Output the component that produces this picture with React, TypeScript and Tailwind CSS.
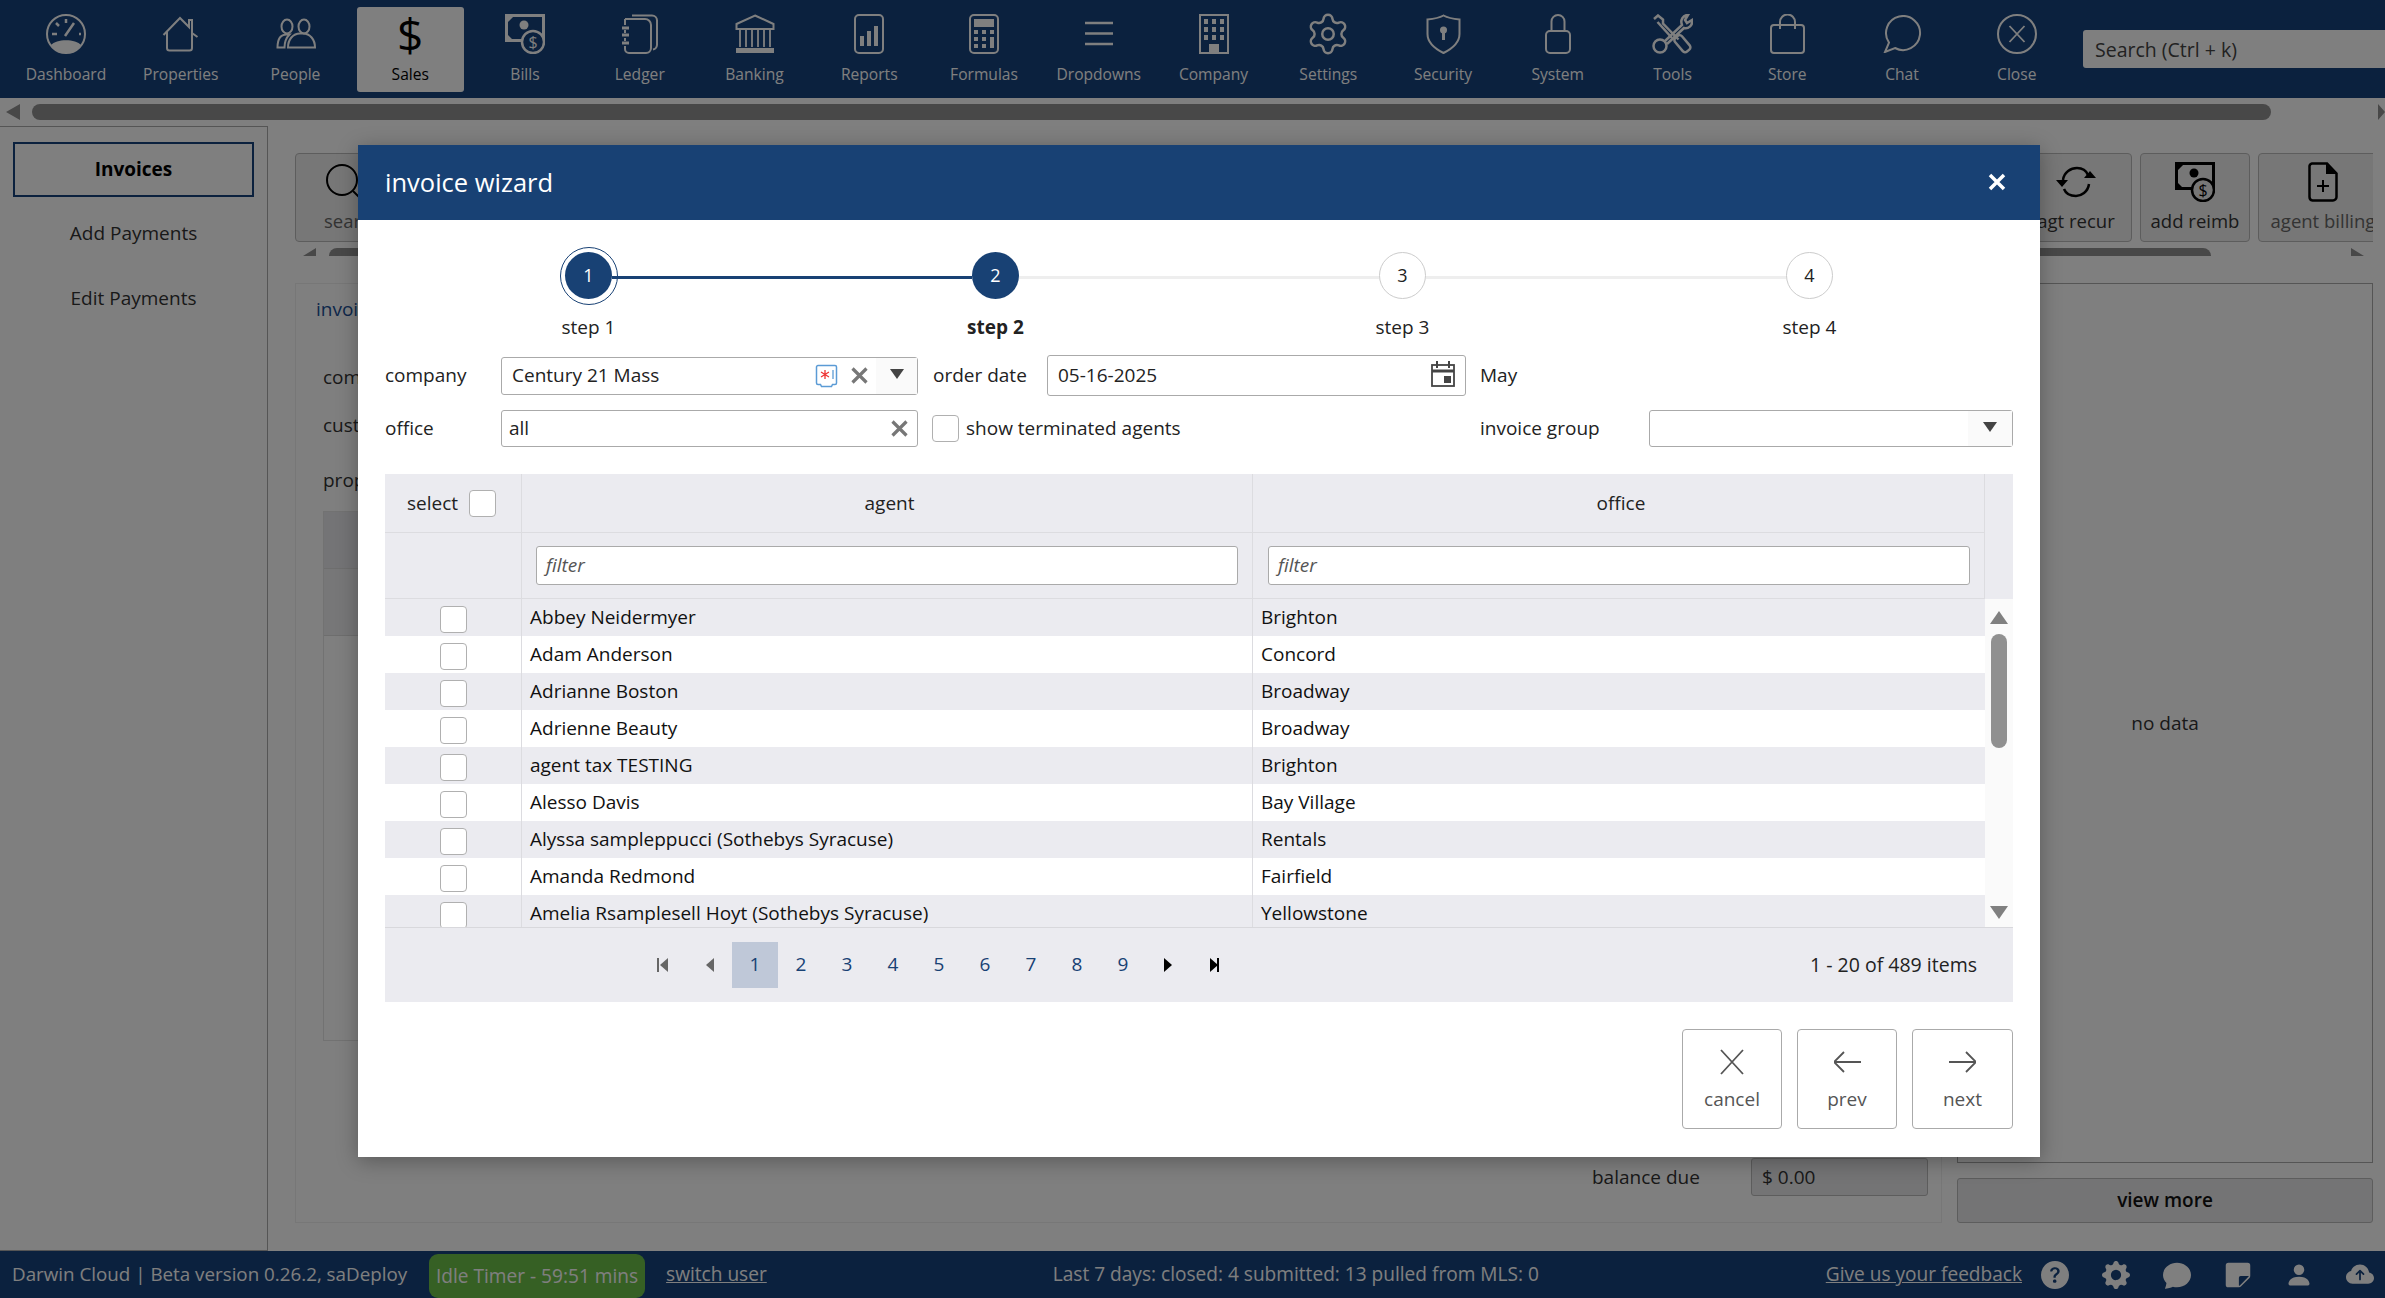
import { BsChatFill, BsCloudArrowUpFill, BsGearFill, BsPersonFill, BsQuestionCircleFill, BsStickyFill } from "react-icons/bs";
import { Settings } from "lucide-react";
import type { ReactNode } from "react";

const NAVY = "#16427c";

function Svg({ w, h, children, className }: { w: number; h: number; children: ReactNode; className?: string }) {
  return (
    <svg width={w} height={h} viewBox={`0 0 ${w} ${h}`} fill="none" stroke="currentColor" strokeWidth={2} className={className}>
      {children}
    </svg>
  );
}

const BillsIcon = ({ bg }: { bg: string }) => (
  <Svg w={40} h={40}>
    <rect x="1.5" y="1.5" width="37" height="25" strokeWidth={3} />
    <path d="M1 1h9L1 10zM1 27v-8l8 8z" fill="currentColor" stroke="none" />
    <circle cx="19" cy="11" r="4.5" fill="currentColor" stroke="none" />
    <circle cx="28" cy="28" r="11" fill={bg} strokeWidth={2.5} />
    <text x="28" y="34" textAnchor="middle" fontSize="16" fill="currentColor" stroke="none">$</text>
  </Svg>
);

const icons: Record<string, ReactNode> = {
  Dashboard: (
    <Svg w={40} h={40}>
      <circle cx="20" cy="20" r="19" />
      <path d="M5 31C10 24.500 30 24.500 35 31 27 42 13 42 5 31z" fill="currentColor" stroke="none" />
      <path d="M19 22 28 9M6 20h5M10 9l3 3M20 5v4M33 20h2" strokeWidth={2.500} />
    </Svg>
  ),
  Properties: (
    <Svg w={37} h={36}>
      <path d="M1.500 19 18 2l9 9V4h3v13l5.500 4" />
      <path d="M5 16v16a2.500 2.500 0 0 0 2.500 2.500h20A2.500 2.500 0 0 0 30 32V16" />
    </Svg>
  ),
  People: (
    <Svg w={40} h={31}>
      <ellipse cx="11" cy="8.500" rx="5.500" ry="7" />
      <ellipse cx="28" cy="8.500" rx="5.500" ry="7" />
      <path d="M1.500 29.500c0-8 3-13 9-13h3c-3 3-5 7-5 13z" />
      <path d="M12 29.500c0-8 5-14 12-14h3c7 0 12 6 12 14z" />
    </Svg>
  ),
  Bills: <BillsIcon bg={NAVY} />,
  Ledger: (
    <Svg w={38} h={40}>
      <path d="M11 1.500h20a5 5 0 0 1 5 5V31a5 5 0 0 1-4 4.500" />
      <path d="M4 5h20a6 6 0 0 1 6 6v23a5 5 0 0 1-5 5H8a4 4 0 0 1-4-4" />
      <path d="M4 5v6M4 16v3M4 24v3M4 32v3" />
      <path d="M1 14h7M1 21h7M1 29h7" strokeWidth={3} />
    </Svg>
  ),
  Banking: (
    <Svg w={40} h={40}>
      <path d="M20 1.500 38.500 10v5h-37v-5z" />
      <path d="M5 16v17M11 16v17M17 16v17M23 16v17M29 16v17M35 16v17" strokeWidth={1.800} />
      <rect x="1" y="34" width="38" height="5" fill="currentColor" stroke="none" />
    </Svg>
  ),
  Reports: (
    <Svg w={30} h={40}>
      <rect x="1" y="1" width="28" height="38" rx="4" />
      <path d="M6 22h4v10H6zM13 17h4v15h-4zM20 12h4v20h-4z" fill="currentColor" stroke="none" />
    </Svg>
  ),
  Formulas: (
    <Svg w={30} h={40}>
      <rect x="1" y="1" width="28" height="38" rx="4" />
      <path d="M5 5h20v8H5zM5 16h4v4H5zM13 16h4v4h-4zM21 16h4v4h-4zM5 23h4v4H5zM13 23h4v4h-4zM5 30h4v4H5zM13 30h4v4h-4zM21 23h4v11h-4z" fill="currentColor" stroke="none" />
    </Svg>
  ),
  Dropdowns: (
    <Svg w={28} h={26}>
      <path d="M0 2h28M0 12.500h28M0 23h28" strokeWidth={2.500} />
    </Svg>
  ),
  Company: (
    <Svg w={30} h={40}>
      <rect x="1" y="1" width="28" height="38" />
      <path d="M5 5h4v5H5zM13 5h4v5h-4zM21 5h4v5h-4zM5 13h4v5H5zM13 13h4v5h-4zM21 13h4v5h-4zM5 21h4v5H5zM13 21h4v5h-4zM21 21h4v5h-4zM10 30h10v9H10z" fill="currentColor" stroke="none" />
    </Svg>
  ),
  Settings: <Settings size={46} strokeWidth={1.300} />,
  Security: (
    <Svg w={35} h={40}>
      <path d="M17.500 1.500C13 4 7 5 1.500 5.500V20c0 9 8 15 16 19 8-4 16-10 16-19V5.500C28 5 22 4 17.500 1.500z" />
      <circle cx="17.500" cy="16" r="3.500" fill="currentColor" stroke="none" />
      <path d="M16 17h3v9h-3z" fill="currentColor" stroke="none" />
    </Svg>
  ),
  System: (
    <Svg w={26} h={40}>
      <rect x="1" y="17" width="24" height="22" rx="4" />
      <path d="M6.500 17V7.500a6.500 6.500 0 0 1 13 0V17" />
    </Svg>
  ),
  Tools: (
    <Svg w={41} h={40}>
      <path d="M2 5 6 1.500l5 4v4l15.500 16" strokeWidth={2.500} />
      <path d="M5.500 8 20 24" strokeWidth={2.500} />
      <rect x="26" y="21" width="9" height="18" rx="3" transform="rotate(-40 30 30)" strokeWidth={2.500} />
      <path d="M13 27 30 11c-2-5 1-10 6-10l-3 5 2 3 5-3c1 6-4 9-8 8L15 30" strokeWidth={2.500} />
      <circle cx="8" cy="32" r="6.500" strokeWidth={2.500} />
    </Svg>
  ),
  Store: (
    <Svg w={35} h={40}>
      <rect x="1" y="11" width="33" height="28" rx="3" />
      <path d="M10 15V8a7.500 7.500 0 0 1 15 0v7" />
    </Svg>
  ),
  Chat: (
    <Svg w={41} h={38}>
      <path d="M7 27.600a17 17 0 1 1 6 5.400L3 37z" strokeWidth={2} />
    </Svg>
  ),
  Close: (
    <Svg w={40} h={40}>
      <circle cx="20" cy="20" r="19" />
      <path d="m12.500 12 15 16M27.500 12l-15 16" strokeWidth={1.800} />
    </Svg>
  ),
};

const navItems = ["Dashboard", "Properties", "People", "Sales", "Bills", "Ledger", "Banking", "Reports", "Formulas", "Dropdowns", "Company", "Settings", "Security", "System", "Tools", "Store", "Chat", "Close"];

const agents = [
  ["Abbey Neidermyer", "Brighton"],
  ["Adam Anderson", "Concord"],
  ["Adrianne Boston", "Broadway"],
  ["Adrienne Beauty", "Broadway"],
  ["agent tax TESTING", "Brighton"],
  ["Alesso Davis", "Bay Village"],
  ["Alyssa sampleppucci (Sothebys Syracuse)", "Rentals"],
  ["Amanda Redmond", "Fairfield"],
  ["Amelia Rsamplesell Hoyt (Sothebys Syracuse)", "Yellowstone"],
];

function NavBar() {
  return (
    <div className="flex items-center h-[98px] shrink-0 pl-[12.500px] bg-[#16427c] overflow-hidden">
      <div className="flex gap-[7.750px] shrink-0">
        {navItems.map((n) => (
          <div key={n} className={`w-[107px] h-[85px] rounded-[3px] flex flex-col items-center pt-[7px] ${n === "Sales" ? "bg-white text-black" : "text-white"}`}>
            <div className="h-[40px] flex items-center justify-center">
              {n === "Sales" ? <span className="text-[46px] leading-[40px]">$</span> : icons[n]}
            </div>
            <span className="mt-[8px] text-[15.600px] leading-[24px]">{n}</span>
          </div>
        ))}
      </div>
      <div className="ml-[12.750px] w-[340px] h-[38px] shrink-0 bg-white rounded-l-[3px] pl-[12px] pt-[1px] flex items-center text-[19.500px] text-[#444]">Search (Ctrl + k)</div>
    </div>
  );
}

function ToolButton({ label, icon, className }: { label: string; icon: ReactNode; className: string }) {
  return (
    <div className={`h-[89px] bg-[#eeeeee] border border-[#bbbbbb] rounded-[4px] flex flex-col items-center pt-[7px] shrink-0 ${className}`}>
      <div className="h-[42px] flex items-center justify-center text-black">{icon}</div>
      <span className="mt-[5px] text-[18.500px] leading-[26px] whitespace-nowrap">{label}</span>
    </div>
  );
}

function BackPage() {
  return (
    <div className="flex-1 min-h-0 flex flex-col">
      <div className="flex items-center h-[16px] mt-[6px] shrink-0">
        <svg width="20" height="16" className="ml-[6px] shrink-0 text-[#909090]"><path d="M14 0v16L0 8z" fill="currentColor" /></svg>
        <div className="ml-[6px] w-[2239px] h-[16px] rounded-full bg-[#909090]" />
        <svg width="7" height="16" className="ml-[107px] shrink-0 text-[#909090]"><path d="M0 0l7 8-7 8z" fill="currentColor" /></svg>
      </div>
      <div className="flex-1 min-h-0 flex mt-[6px]">
        <div className="w-[268px] shrink-0 border-t border-r border-b border-[#aaaaaa] px-[13px] pt-[15px] text-[19px] text-[#333]">
          <div className="h-[55px] border-2 border-[#16427c] flex items-center justify-center font-bold text-black">Invoices</div>
          <div className="h-[65px] mt-[4px] flex items-center justify-center">Add Payments</div>
          <div className="h-[65px] flex items-center justify-center">Edit Payments</div>
        </div>
        <div className="flex-1 min-w-0 pl-[27px] pr-[12px] pt-[27px] pb-[28px] flex flex-col">
          <div className="flex justify-between h-[89px] overflow-hidden shrink-0">
            <ToolButton
              label="sear"
              className="w-[116px] text-[#666] !items-start pl-[28px]"
              icon={<svg width="40" height="40" fill="none" stroke="currentColor" strokeWidth="2"><circle cx="18" cy="18" r="15" /><path d="m29 29 9 9" /></svg>}
            />
            <div className="flex gap-[8px] -mr-[15px]">
              <ToolButton
                label="agt recur"
                className="w-[112px] text-[#333]"
                icon={
                  <svg width="40" height="32" fill="none" stroke="currentColor" strokeWidth="2.500">
                    <path d="M7 14c1-8 8-12 14-12 5 0 9 2 11 7M33 18c-1 8-8 12-13 12-6 0-10-2-12-7" />
                    <path d="M0 14h12l-6 7zM28 12h12l-6-7z" fill="currentColor" stroke="none" />
                  </svg>
                }
              />
              <ToolButton label="add reimb" className="w-[110px] text-[#333]" icon={<BillsIcon bg="#eeeeee" />} />
              <ToolButton
                label="agent billing"
                className="w-[130px] text-[#666]"
                icon={
                  <svg width="30" height="40" fill="none" stroke="currentColor" strokeWidth="2.500">
                    <path d="M4 1.500h15l9.500 10V35a3.500 3.500 0 0 1-3.500 3.500H4.500A3.500 3.500 0 0 1 1.500 35V4A3 3 0 0 1 4 1.500z" />
                    <path d="M18 1.500V12h10.500z" fill="currentColor" stroke="none" />
                    <path d="M15 18v12M9 24h12" strokeWidth="2" />
                  </svg>
                }
              />
            </div>
          </div>
          <div className="flex items-start h-[8px] mt-[6px] overflow-hidden shrink-0">
            <svg width="13" height="8" className="ml-[8px] text-[#909090]"><path d="M13 0v8H0z" fill="currentColor" /></svg>
            <div className="ml-[13px] w-[1882px] h-[16px] rounded-t-[8px] bg-[#909090]" />
            <svg width="13" height="8" className="ml-[140px] text-[#909090]"><path d="M0 0v8h13z" fill="currentColor" /></svg>
          </div>
          <div className="flex gap-[15px] flex-1 min-h-0 mt-[27px]">
            <div className="flex-1 min-w-0 border border-[#eeeeee] flex flex-col text-[19px] text-[#333]">
              <div className="pl-[20px] pt-[12px] leading-[26px] text-[#1a4f96]">invoi</div>
              <div className="pl-[27px] mt-[42px] leading-[26px]">com</div>
              <div className="pl-[27px] mt-[22px] leading-[26px]">cust</div>
              <div className="pl-[27px] mt-[29px] leading-[26px]">prop</div>
              <div className="ml-[27px] mr-[27px] mt-[18px] h-[530px] border border-[#e4e4e4] flex flex-col">
                <div className="h-[57px] bg-[#e8e8ec] border-b border-[#dddddd]" />
                <div className="h-[67px] bg-[#eeeef0] border-b border-[#dddddd]" />
              </div>
              <div className="mt-auto flex items-center justify-end pr-[13px] pb-[26px]">
                <span className="w-[159px]">balance due</span>
                <div className="w-[177px] h-[38px] bg-[#e8e8ea] border border-[#bbbbbb] rounded-[3px] flex items-center pl-[10px]">$ 0.00</div>
              </div>
            </div>
            <div className="w-[416px] shrink-0 flex flex-col gap-[15px]">
              <div className="flex-1 border border-[#aaaaaa] flex items-center justify-center text-[19px] text-[#333]">no data</div>
              <div className="h-[45px] bg-[#e8e8ea] border border-[#bbbbbb] rounded-[3px] flex items-center justify-center text-[19px] font-semibold text-[#111]">view more</div>
            </div>
          </div>
        </div>
      </div>
    </div>
  );
}

function StatusBar() {
  return (
    <div className="h-[47px] shrink-0 bg-[#16427c] flex items-center text-white text-[19.100px] whitespace-nowrap">
      <span className="ml-[12px] w-[417px] shrink-0 text-[18.800px]">Darwin Cloud | Beta version 0.26.2, saDeploy</span>
      <span className="h-[44px] self-end px-[7px] rounded-[9px] bg-[#6cc048] flex items-center">Idle Timer - 59:51 mins</span>
      <span className="ml-[21px] underline">switch user</span>
      <span className="ml-[286px]">Last 7 days: closed: 4 submitted: 13 pulled from MLS: 0</span>
      <span className="ml-auto underline">Give us your feedback</span>
      <div className="ml-[19px] mr-[11px] flex items-center gap-[33px] text-[28px]">
        <BsQuestionCircleFill />
        <BsGearFill />
        <BsChatFill />
        <BsStickyFill />
        <BsPersonFill />
        <BsCloudArrowUpFill />
      </div>
    </div>
  );
}

const XMark = ({ size = 17 }: { size?: number }) => (
  <svg width={size} height={size} viewBox="0 0 17 17" stroke="#777777" strokeWidth="3.200" fill="none" className="shrink-0"><path d="m1.500 1.500 14 14M15.500 1.500l-14 14" /></svg>
);

const Caret = () => (
  <svg width="14" height="10" viewBox="0 0 14 10" className="shrink-0"><path d="M0 0h14L7 10z" fill="#444444" /></svg>
);

const Check = ({ className = "" }: { className?: string }) => (
  <div className={`w-[27px] h-[27px] bg-white border border-[#b0b0b0] rounded-[4px] shrink-0 ${className}`} />
);

function Stepper() {
  const steps = [1, 2, 3, 4];
  return (
    <div className="grid grid-cols-4 pt-[27px]">
      {steps.map((s) => {
        const left = s === 1 ? "bg-transparent" : s === 2 ? "bg-[#184174]" : "bg-[#eeeeee]";
        const right = s === 4 ? "bg-transparent" : s === 1 ? "bg-[#184174]" : "bg-[#eeeeee]";
        const circle = s <= 2 ? "bg-[#184174] text-white" : "bg-white border border-[#cccccc] text-[#222]";
        return (
          <div key={s} className="flex flex-col items-center">
            <div className="flex items-center w-full h-[57px]">
              <div className={`flex-1 h-[3px] mt-[3px] ${left}`} />
              <div className={`relative w-[47px] h-[47px] rounded-full flex items-center justify-center text-[18px] ${circle}`}>
                {s}
                {s === 1 && <div className="absolute -inset-[5.500px] rounded-full border border-[#184174]" />}
              </div>
              <div className={`flex-1 h-[3px] mt-[3px] ${right}`} />
            </div>
            <span className={`mt-[10px] text-[19px] leading-[27px] text-[#222] ${s === 2 ? "font-bold" : ""}`}>step {s}</span>
          </div>
        );
      })}
    </div>
  );
}

function Wizard() {
  return (
    <div className="absolute left-[358px] top-[145px] w-[1682px] h-[1012px] z-20 bg-white shadow-[0_4px_20px_rgba(0,0,0,0.3)] text-[19px] text-[#222] flex flex-col">
      <div className="h-[75px] shrink-0 bg-[#184174] flex items-center justify-between pl-[27px] pr-[34px] text-white">
        <span className="text-[25.500px]">invoice wizard</span>
        <svg width="18" height="18" viewBox="0 0 18 18" stroke="white" strokeWidth="3.500" fill="none" className="mb-[2px]"><path d="m2 2 14 14M16 2 2 16" /></svg>
      </div>
      <div className="px-[27px] flex flex-col flex-1">
        <Stepper />
        <div className="flex items-center h-[41px] mt-[14px]">
          <span className="w-[116px] shrink-0">company</span>
          <div className="w-[417px] h-[38px] border border-[#aaaaaa] rounded-[3px] flex items-center pl-[10px]">
            <span className="flex-1">Century 21 Mass</span>
            <svg width="23" height="24" viewBox="0 0 23 24" fill="none" className="shrink-0">
              <path d="M3 1.500h17a1.500 1.500 0 0 1 1.500 1.500v16a1.500 1.500 0 0 1-1.500 1.500h-2.500l-1 2h-10l-1-2H3A1.500 1.500 0 0 1 1.500 19V3A1.500 1.500 0 0 1 3 1.500z" stroke="#5b9bd5" strokeWidth="1.500" />
              <path d="M10 6v9M6 8l8 5M14 8l-8 5" stroke="#ee3333" strokeWidth="1.300" />
              <path d="M18 6v9" stroke="#5b9bd5" strokeWidth="1.300" />
            </svg>
            <div className="ml-[13px]"><XMark /></div>
            <div className="ml-[8px] w-[41px] h-full bg-[#fafafa] flex items-center justify-center pb-[4px]"><Caret /></div>
          </div>
          <span className="ml-[15px] w-[114px] shrink-0">order date</span>
          <div className="w-[419px] h-[41px] border border-[#aaaaaa] rounded-[3px] flex items-center pl-[10px]">
            <span className="flex-1">05-16-2025</span>
            <svg width="24" height="26" viewBox="0 0 24 26" fill="none" stroke="#444444" strokeWidth="1.800" className="mr-[10px] mb-[3px]">
              <rect x="1" y="4" width="22" height="21" />
              <path d="M1 10h22" strokeWidth="3" />
              <path d="M6 0v7M18 0v7" strokeWidth="2" />
              <path d="M13 15h7v7h-7z" fill="#444444" stroke="none" />
            </svg>
          </div>
          <span className="ml-[14px]">May</span>
        </div>
        <div className="flex items-center h-[37px] mt-[14px]">
          <span className="w-[116px] shrink-0">office</span>
          <div className="w-[417px] h-[37px] border border-[#aaaaaa] rounded-[3px] flex items-center pl-[7px] pr-[9px]">
            <span className="flex-1">all</span>
            <XMark />
          </div>
          <Check className="ml-[14px]" />
          <span className="ml-[7px] w-[514px] shrink-0">show terminated agents</span>
          <span className="w-[169px] shrink-0">invoice group</span>
          <div className="w-[364px] h-[37px] border border-[#aaaaaa] rounded-[3px] flex items-center justify-end">
            <div className="w-[44px] h-full bg-[#fafafa] flex items-center justify-center pb-[3px]"><Caret /></div>
          </div>
        </div>
        <AgentGrid />
        <div className="flex justify-end gap-[15px] mt-[27px]">
          <ActionButton label="cancel" w="w-[100px]">
            <path d="M2 2 24 26M24 2 2 26" />
          </ActionButton>
          <ActionButton label="prev" w="w-[100px]">
            <path d="M0 14h27M10 4 0 14l10 10" />
          </ActionButton>
          <ActionButton label="next" w="w-[101px]">
            <path d="M0 14h27M17 4l10 10-10 10" />
          </ActionButton>
        </div>
      </div>
    </div>
  );
}

function ActionButton({ label, w, children }: { label: string; w: string; children: ReactNode }) {
  return (
    <div className={`${w} h-[100px] border border-[#aaaaaa] rounded-[4px] flex flex-col items-center pt-[18px] text-[#555]`}>
      <svg width="27" height="28" viewBox="0 0 27 28" fill="none" stroke="#555555" strokeWidth="1.800">{children}</svg>
      <span className="mt-[10px] text-[19px] leading-[26px]">{label}</span>
    </div>
  );
}

function PageArrow({ dir, end, muted }: { dir: "l" | "r"; end?: boolean; muted?: boolean }) {
  const fill = muted ? "#666666" : "#000000";
  return (
    <div className="w-[46px] h-[46px] flex items-center justify-center">
      <svg width="14" height="14" viewBox="0 0 14 14" fill={fill}>
        {dir === "l" ? <path d="M12 0v14L4 7z" /> : <path d="M2 0v14l8-7z" />}
        {end && (dir === "l" ? <rect x="1" y="0" width="2" height="14" /> : <rect x="9" y="0" width="2" height="14" />)}
      </svg>
    </div>
  );
}

function FilterBox() {
  return <div className="flex-1 h-[39px] bg-white border border-[#aaaaaa] rounded-[3px] flex items-center pl-[9px] italic text-[#555]">filter</div>;
}

function AgentGrid() {
  return (
    <div className="mt-[27px] flex flex-col">
      <div className="grid grid-cols-[137px_731px_732px_28px] bg-[#ebebf0]">
        <div className="h-[59px] border-r border-b border-[#dcdce0] flex items-center pl-[22px] gap-[11px]">
          <span>select</span>
          <Check />
        </div>
        <div className="h-[59px] border-r border-b border-[#dcdce0] flex items-center justify-center pl-[5px]">agent</div>
        <div className="h-[59px] border-r border-b border-[#dcdce0] flex items-center justify-center pl-[5px]">office</div>
        <div className="row-span-2" />
        <div className="h-[66px] border-r border-b border-[#dcdce0]" />
        <div className="h-[66px] border-r border-b border-[#dcdce0] flex items-center pl-[14px] pr-[14px]">
          <FilterBox />
        </div>
        <div className="h-[66px] border-r border-b border-[#dcdce0] flex items-center pl-[15px] pr-[14px]">
          <FilterBox />
        </div>
      </div>
      <div className="flex h-[328px] overflow-hidden">
        <div className="flex-1 min-w-0">
          {agents.map(([name, office], i) => (
            <div key={name} className={`grid grid-cols-[137px_731px_732px] h-[37px] ${i % 2 === 0 ? "bg-[#ebebf0]" : "bg-white"}`}>
              <div className="border-r border-[#dcdce0] flex items-center justify-center">
                <Check className="mt-[3px]" />
              </div>
              <div className="border-r border-[#dcdce0] flex items-center pl-[8px] text-[#111]">{name}</div>
              <div className="flex items-center pl-[8px] text-[#111]">{office}</div>
            </div>
          ))}
        </div>
        <div className="w-[28px] shrink-0 bg-[#fafafa] flex flex-col items-center pt-[12px]">
          <svg width="18" height="13" viewBox="0 0 18 13"><path d="M9 0 18 13H0z" fill="#808080" /></svg>
          <div className="mt-[10px] w-[16px] h-[114px] rounded-full bg-[#909090]" />
          <svg width="18" height="13" viewBox="0 0 18 13" className="mt-[158px]"><path d="M0 0h18L9 13z" fill="#808080" /></svg>
        </div>
      </div>
      <div className="h-[75px] bg-[#ebebf0] border-t border-[#d8d8dc] flex items-center pl-[255px] pr-[36px] pb-[1px]">
        <PageArrow dir="l" end muted />
        <PageArrow dir="l" muted />
        {[1, 2, 3, 4, 5, 6, 7, 8, 9].map((p) => (
          <div key={p} className={`w-[46px] h-[46px] flex items-center justify-center text-[#184174] ${p === 1 ? "bg-[#bfc8d8]" : ""}`}>{p}</div>
        ))}
        <PageArrow dir="r" />
        <PageArrow dir="r" end />
        <span className="ml-auto text-[19.500px]">1 - 20 of 489 items</span>
      </div>
    </div>
  );
}

export default function App() {
  return (
    <div className="relative w-[2385px] h-[1298px] overflow-hidden bg-white font-['Open_Sans',sans-serif] flex flex-col">
      <NavBar />
      <BackPage />
      <StatusBar />
      <div className="absolute inset-0 z-10 bg-black/50" />
      <Wizard />
    </div>
  );
}
